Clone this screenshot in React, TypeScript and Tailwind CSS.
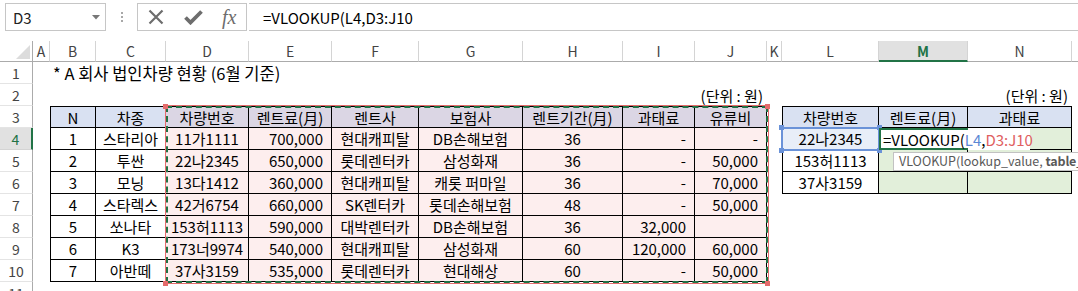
type Col = { id: string; w: string };

const COLS: Col[] = [
  { id: 'A', w: 'w-[17px]' },
  { id: 'B', w: 'w-[46px]' },
  { id: 'C', w: 'w-[70px]' },
  { id: 'D', w: 'w-[83px]' },
  { id: 'E', w: 'w-[83px]' },
  { id: 'F', w: 'w-[87px]' },
  { id: 'G', w: 'w-[104px]' },
  { id: 'H', w: 'w-[100px]' },
  { id: 'I', w: 'w-[72px]' },
  { id: 'J', w: 'w-[72px]' },
  { id: 'K', w: 'w-[15px]' },
  { id: 'L', w: 'w-[97px]' },
  { id: 'M', w: 'w-[89px]' },
  { id: 'N', w: 'w-[104px]' },
  { id: 'O', w: 'w-[60px]' },
];

const T1 = ['B', 'C', 'D', 'E', 'F', 'G', 'H', 'I', 'J'];
const T2 = ['L', 'M', 'N'];
const TINTED = ['D', 'E', 'F', 'G', 'H', 'I', 'J'];
const NUMERIC = ['E', 'I', 'J'];

const header = ['N', '차종', '차량번호', '렌트료(月)', '렌트사', '보험사', '렌트기간(月)', '과태료', '유류비'];

const cars = [
  ['1', '스타리아', '11가1111', '700,000', '현대캐피탈', 'DB손해보험', '36', '-', '-'],
  ['2', '투싼', '22나2345', '650,000', '롯데렌터카', '삼성화재', '36', '-', '50,000'],
  ['3', '모닝', '13다1412', '360,000', '현대캐피탈', '캐롯 퍼마일', '36', '-', '70,000'],
  ['4', '스타렉스', '42거6754', '660,000', 'SK렌터카', '롯데손해보험', '48', '-', '50,000'],
  ['5', '쏘나타', '153허1113', '590,000', '대박렌터카', 'DB손해보험', '36', '32,000', ''],
  ['6', 'K3', '173너9974', '540,000', '현대캐피탈', '삼성화재', '60', '120,000', '60,000'],
  ['7', '아반떼', '37사3159', '535,000', '롯데렌터카', '현대해상', '60', '-', '50,000'],
];

const lookup = ['22나2345', '153허1113', '37사3159'];

function value(r: number, c: string): string {
  if (r === 1 && c === 'B') return '* A 회사 법인차량 현황 (6월 기준)';
  if (r === 2 && (c === 'J' || c === 'N')) return '(단위 : 원)';
  const i = T1.indexOf(c);
  if (i >= 0 && r === 3) return header[i];
  if (i >= 0 && r >= 4 && r <= 10) return cars[r - 4][i];
  if (r === 3 && c === 'L') return '차량번호';
  if (r === 3 && c === 'M') return '렌트료(月)';
  if (r === 3 && c === 'N') return '과태료';
  if (r >= 4 && r <= 6 && c === 'L') return lookup[r - 4];
  return '';
}

function cellClass(r: number, c: string) {
  const cls: string[] = [];
  const inT1 = r >= 3 && r <= 10 && T1.includes(c);
  const inT2 = r >= 3 && r <= 6 && T2.includes(c);
  if (inT1 || inT2) {
    cls.push('border-r border-b border-black');
    if (c === 'B' || c === 'L') cls.push('border-l');
    if (r === 3) cls.push('border-t');
  }
  if (r === 1 && c === 'B') cls.push('justify-start pl-[3px] text-[16.5px]');
  else if (r === 2) cls.push('justify-end pr-[4px]');
  else if (inT1 && r >= 4 && NUMERIC.includes(c)) cls.push('justify-end pr-[8px]');
  else cls.push('justify-center');

  if (r === 3 && (c === 'B' || c === 'C' || inT2)) cls.push('bg-[#d9e1f2]');
  else if (r === 3 && TINTED.includes(c)) cls.push('bg-[#dbd6e4]');
  else if (inT1 && TINTED.includes(c)) cls.push('bg-[#fdeeee]');
  else if (inT2 && c === 'L' && r === 4) cls.push('bg-[#e8eef8]');
  else if (inT2 && c !== 'L') cls.push('bg-[#e2efda]');
  return cls.join(' ');
}

function FormulaBar() {
  return (
    <div className="h-[41px] flex items-start pt-[3px]">
      <div className="ml-[5px] w-[101px] h-[28px] border border-[#c6c6c6] flex items-center justify-between pl-[7px] pr-[5px] text-[15px] text-[#222]">
        <span>D3</span>
        <svg width="8" height="5" viewBox="0 0 8 5">
          <polygon points="0,0 8,0 4,4.5" fill="#777" />
        </svg>
      </div>
      <div className="w-[31px] h-[28px] flex flex-col items-center justify-center gap-[2px]">
        <span className="w-[2px] h-[2px] bg-[#a8a8a8]" />
        <span className="w-[2px] h-[2px] bg-[#a8a8a8]" />
        <span className="w-[2px] h-[2px] bg-[#a8a8a8]" />
      </div>
      <div className="w-[110px] h-[28px] border border-[#c6c6c6] flex items-center pl-[10px]">
        <svg width="16" height="16" viewBox="0 0 16 16">
          <path d="M1.5 1.5 14.5 14.5 M14.5 1.5 1.5 14.5" stroke="#6d6d6d" strokeWidth="2.2" />
        </svg>
        <svg className="ml-[20px]" width="19" height="15" viewBox="0 0 19 15">
          <path d="M1.5 7.5 6.5 12.5 17.5 1.5" stroke="#6d6d6d" strokeWidth="3.8" fill="none" />
        </svg>
        <span className="ml-[19px] font-['Liberation_Serif',serif] italic text-[20px] leading-none text-[#6d6d6d]">fx</span>
      </div>
      <div className="ml-[2px] flex-1 h-[28px] border-y border-[#c6c6c6] flex items-center pl-[14px] text-[15px] text-black">
        =VLOOKUP(L4,D3:J10
      </div>
    </div>
  );
}

function ColumnHeaders() {
  return (
    <div className="h-[21px] flex">
      <div className="w-[33px] shrink-0 h-full border-r border-b border-[#ababab] flex items-end justify-end pr-[2px] pb-[2px]">
        <svg width="14" height="14" viewBox="0 0 14 14">
          <polygon points="14,0 14,14 0,14" fill="#dcdcdc" />
        </svg>
      </div>
      {COLS.map((col) => (
        <div
          key={col.id}
          className={
            col.id === 'M'
              ? `${col.w} shrink-0 h-full border-r border-r-[#d4d4d4] border-b-2 border-b-[#217346] bg-[#e1e1e1] text-[#217346] font-semibold flex items-center justify-center text-[14px]`
              : `${col.w} shrink-0 h-full border-r border-r-[#d4d4d4] border-b border-b-[#ababab] text-[#444] flex items-center justify-center text-[14px]`
          }
        >
          {col.id}
        </div>
      ))}
    </div>
  );
}

function Row({ r }: { r: number }) {
  return (
    <div className="h-[22px] flex">
      <div
        className={
          r === 4
            ? 'w-[33px] shrink-0 h-full border-r-2 border-r-[#217346] border-b border-b-[#d4d4d4] bg-[#e1e1e1] text-[#217346] flex items-center justify-center text-[14px]'
            : 'w-[33px] shrink-0 h-full border-r border-r-[#ababab] border-b border-b-[#e4e4e4] text-[#444] flex items-center justify-center text-[14px]'
        }
      >
        {r}
      </div>
      {COLS.map((col) => (
        <div
          key={col.id}
          className={`${col.w} shrink-0 h-full flex items-center whitespace-nowrap text-[15px] text-black ${cellClass(r, col.id)}`}
        >
          {value(r, col.id)}
        </div>
      ))}
    </div>
  );
}

export default function App() {
  const rows = [1, 2, 3, 4, 5, 6, 7, 8, 9, 10, 11];
  return (
    <div className="relative w-[1078px] h-[291px] overflow-hidden bg-white font-['Noto_Sans_CJK_KR','Noto_Sans',sans-serif] leading-none">
      <FormulaBar />
      <ColumnHeaders />
      {rows.map((r) => (
        <Row key={r} r={r} />
      ))}

      {/* copy marquee + formula reference on D3:J10 */}
      <div className="absolute left-[165px] top-[105px] w-[604px] h-[179px] border border-[#e46c6c]">
        <div className="w-full h-full border-2 border-dashed border-[#217346]" />
      </div>
      <span className="absolute left-[163px] top-[104px] w-[5px] h-[5px] bg-[#e46c6c]" />
      <span className="absolute left-[765px] top-[104px] w-[5px] h-[5px] bg-[#e46c6c]" />
      <span className="absolute left-[163px] top-[281px] w-[5px] h-[5px] bg-[#e46c6c]" />
      <span className="absolute left-[765px] top-[281px] w-[5px] h-[5px] bg-[#e46c6c]" />

      {/* reference L4 */}
      <div className="absolute left-[781px] top-[127px] w-[99px] h-[24px] border-2 border-[#6a92d8]" />
      <span className="absolute left-[779px] top-[125px] w-[5px] h-[5px] bg-[#6a92d8]" />
      <span className="absolute left-[877px] top-[125px] w-[5px] h-[5px] bg-[#6a92d8]" />
      <span className="absolute left-[779px] top-[148px] w-[5px] h-[5px] bg-[#6a92d8]" />
      <span className="absolute left-[877px] top-[148px] w-[5px] h-[5px] bg-[#6a92d8]" />

      {/* in-cell editor M4 */}
      <div className="absolute left-[879px] top-[128px] w-[151px] h-[22px] bg-white flex items-center pl-[4px] text-[15px] whitespace-nowrap">
        <div className="absolute left-0 top-0 w-[89px] h-full border-y-2 border-l-2 border-[#217346]" />
        <span className="relative">
          =VLOOKUP(<span className="text-[#5b87d4]">L4</span>,<span className="text-[#e0605f]">D3:J10</span>
        </span>
      </div>

      {/* function tooltip */}
      <div className="absolute left-[893px] top-[152px] w-[220px] h-[19px] bg-white border border-[#c2c2c2] flex items-center pl-[5px] text-[12.5px] text-[#595959] whitespace-pre">
        VLOOKUP(lookup_value, <span className="font-semibold tracking-[-0.2px]">table_array</span>
      </div>
    </div>
  );
}
